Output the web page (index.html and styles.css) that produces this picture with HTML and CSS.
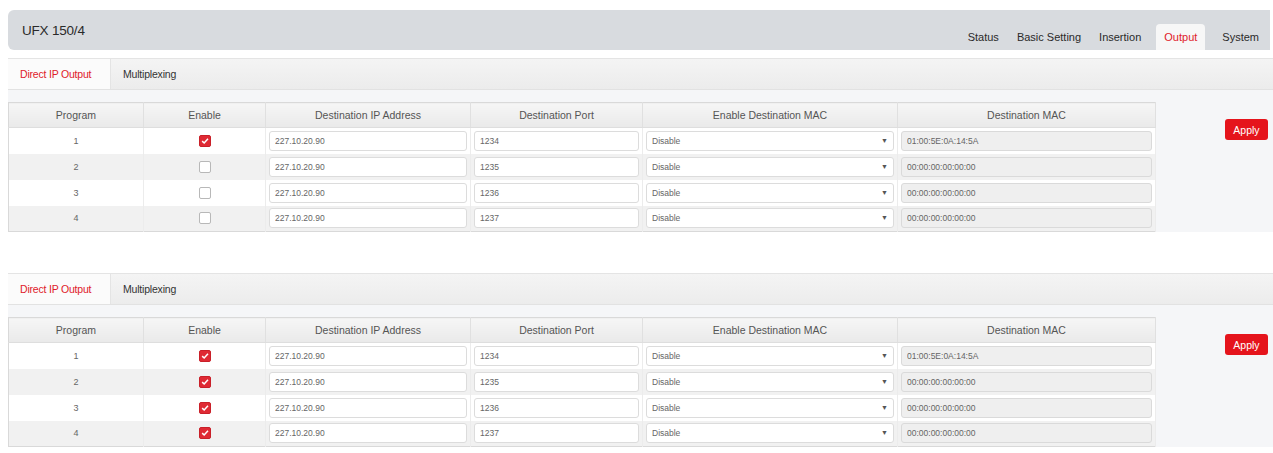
FILE: index.html
```html
<!DOCTYPE html>
<html lang="en">
<head>
    <meta charset="UTF-8">
    <title>UFX 150/4 - Output</title>
    <link rel="stylesheet" href="styles.css">
</head>
<body>
<div class="page">
    <div class="top-bar">
        <div class="device-name">UFX 150/4</div>
        <ul class="main-nav">
            <li>Status</li>
            <li>Basic Setting</li>
            <li>Insertion</li>
            <li class="active">Output</li>
            <li>System</li>
        </ul>
    </div>

    <!-- first panel: only program 1 enabled -->
    <div class="panel">
        <div class="sub-tabs">
            <div class="sub-tab active">Direct IP Output</div>
            <div class="sub-tab">Multiplexing</div>
        </div>
        <div class="panel-body">
            <table class="output-table">
                <thead>
                <tr>
                    <th class="col-program">Program</th>
                    <th class="col-enable">Enable</th>
                    <th class="col-ip">Destination IP Address</th>
                    <th class="col-port">Destination Port</th>
                    <th class="col-macsel">Enable Destination MAC</th>
                    <th class="col-mac">Destination MAC</th>
                </tr>
                </thead>
                <tbody>
                <tr>
                    <td>1</td>
                    <td><span class="check checked"><svg viewBox="0 0 12 12"><path d="M2.6 6.2 L5 8.4 L9.6 3.4" /></svg></span></td>
                    <td><input class="field" type="text" value="227.10.20.90"></td>
                    <td><input class="field" type="text" value="1234"></td>
                    <td><div class="select-wrap"><select class="field"><option>Disable</option></select><span class="arrow">&#9660;</span></div></td>
                    <td><input class="field readonly" type="text" value="01:00:5E:0A:14:5A" readonly></td>
                </tr>
                <tr>
                    <td>2</td>
                    <td><span class="check"></span></td>
                    <td><input class="field" type="text" value="227.10.20.90"></td>
                    <td><input class="field" type="text" value="1235"></td>
                    <td><div class="select-wrap"><select class="field"><option>Disable</option></select><span class="arrow">&#9660;</span></div></td>
                    <td><input class="field readonly" type="text" value="00:00:00:00:00:00" readonly></td>
                </tr>
                <tr>
                    <td>3</td>
                    <td><span class="check"></span></td>
                    <td><input class="field" type="text" value="227.10.20.90"></td>
                    <td><input class="field" type="text" value="1236"></td>
                    <td><div class="select-wrap"><select class="field"><option>Disable</option></select><span class="arrow">&#9660;</span></div></td>
                    <td><input class="field readonly" type="text" value="00:00:00:00:00:00" readonly></td>
                </tr>
                <tr>
                    <td>4</td>
                    <td><span class="check"></span></td>
                    <td><input class="field" type="text" value="227.10.20.90"></td>
                    <td><input class="field" type="text" value="1237"></td>
                    <td><div class="select-wrap"><select class="field"><option>Disable</option></select><span class="arrow">&#9660;</span></div></td>
                    <td><input class="field readonly" type="text" value="00:00:00:00:00:00" readonly></td>
                </tr>
                </tbody>
            </table>
            <div class="apply-area">
                <button class="apply-button">Apply</button>
            </div>
        </div>
    </div>

    <!-- second panel: all programs enabled -->
    <div class="panel panel-second">
        <div class="sub-tabs">
            <div class="sub-tab active">Direct IP Output</div>
            <div class="sub-tab">Multiplexing</div>
        </div>
        <div class="panel-body">
            <table class="output-table">
                <thead>
                <tr>
                    <th class="col-program">Program</th>
                    <th class="col-enable">Enable</th>
                    <th class="col-ip">Destination IP Address</th>
                    <th class="col-port">Destination Port</th>
                    <th class="col-macsel">Enable Destination MAC</th>
                    <th class="col-mac">Destination MAC</th>
                </tr>
                </thead>
                <tbody>
                <tr>
                    <td>1</td>
                    <td><span class="check checked"><svg viewBox="0 0 12 12"><path d="M2.6 6.2 L5 8.4 L9.6 3.4" /></svg></span></td>
                    <td><input class="field" type="text" value="227.10.20.90"></td>
                    <td><input class="field" type="text" value="1234"></td>
                    <td><div class="select-wrap"><select class="field"><option>Disable</option></select><span class="arrow">&#9660;</span></div></td>
                    <td><input class="field readonly" type="text" value="01:00:5E:0A:14:5A" readonly></td>
                </tr>
                <tr>
                    <td>2</td>
                    <td><span class="check checked"><svg viewBox="0 0 12 12"><path d="M2.6 6.2 L5 8.4 L9.6 3.4" /></svg></span></td>
                    <td><input class="field" type="text" value="227.10.20.90"></td>
                    <td><input class="field" type="text" value="1235"></td>
                    <td><div class="select-wrap"><select class="field"><option>Disable</option></select><span class="arrow">&#9660;</span></div></td>
                    <td><input class="field readonly" type="text" value="00:00:00:00:00:00" readonly></td>
                </tr>
                <tr>
                    <td>3</td>
                    <td><span class="check checked"><svg viewBox="0 0 12 12"><path d="M2.6 6.2 L5 8.4 L9.6 3.4" /></svg></span></td>
                    <td><input class="field" type="text" value="227.10.20.90"></td>
                    <td><input class="field" type="text" value="1236"></td>
                    <td><div class="select-wrap"><select class="field"><option>Disable</option></select><span class="arrow">&#9660;</span></div></td>
                    <td><input class="field readonly" type="text" value="00:00:00:00:00:00" readonly></td>
                </tr>
                <tr>
                    <td>4</td>
                    <td><span class="check checked"><svg viewBox="0 0 12 12"><path d="M2.6 6.2 L5 8.4 L9.6 3.4" /></svg></span></td>
                    <td><input class="field" type="text" value="227.10.20.90"></td>
                    <td><input class="field" type="text" value="1237"></td>
                    <td><div class="select-wrap"><select class="field"><option>Disable</option></select><span class="arrow">&#9660;</span></div></td>
                    <td><input class="field readonly" type="text" value="00:00:00:00:00:00" readonly></td>
                </tr>
                </tbody>
            </table>
            <div class="apply-area">
                <button class="apply-button">Apply</button>
            </div>
        </div>
    </div>
</div>
</body>
</html>
```

FILE: styles.css
```css
body {
    margin: 0;
    background-color: #ffffff;
    color: #444;
    font-family: "Liberation Sans", Arial, sans-serif;
}

.page {
    padding: 10px 0 0 8px;
}

.top-bar {
    display: flex;
    justify-content: space-between;
    align-items: flex-end;
    height: 40px;
    background-color: #d8dbdf;
    border-radius: 6px 0 0 6px;
    padding-left: 14px;
    margin-right: 3px;
}

.device-name {
    align-self: center;
    font-size: 13.5px;
    color: #2a2a2a;
    letter-spacing: -0.2px;
}

.main-nav {
    display: flex;
    list-style: none;
    margin: 0;
    padding: 0 2px 0 0;
    font-size: 11px;
    color: #2a2a2a;
}

.main-nav li {
    padding: 0 9px;
    height: 26px;
    line-height: 27px;
}

.main-nav li.active {
    background-color: #f7f7f7;
    color: #e0202a;
    border-radius: 4px 4px 0 0;
    padding: 0 8px;
    margin: 0 8px 0 6px;
}

.panel {
    margin-top: 8px;
}

.panel-second {
    margin-top: 41px;
}

.sub-tabs {
    display: flex;
    height: 30px;
    background: linear-gradient(#f4f4f4, #ececec);
    border-top: 1px solid #e4e4e4;
    border-bottom: 1px solid #e2e2e2;
    font-size: 10.5px;
}

.sub-tab {
    padding: 0 12px;
    line-height: 30px;
    color: #333;
    letter-spacing: -0.2px;
}

.sub-tab.active {
    background-color: #fbfbfb;
    color: #e0202a;
    border-right: 1px solid #e4e4e4;
    width: 78px;
}

.panel-body {
    display: flex;
    align-items: flex-start;
    background-color: #f5f6f8;
    padding-top: 12px;
}

.output-table {
    border-collapse: collapse;
    border: 1px solid #d9d9d9;
    width: 1147px;
    table-layout: fixed;
    font-size: 10.5px;
    color: #555;
}

.output-table th,
.output-table td {
    box-sizing: border-box;
}

.col-program { width: 135px; }
.col-enable { width: 122px; }
.col-ip { width: 205px; }
.col-port { width: 172px; }
.col-macsel { width: 255px; }
.col-mac { width: 258px; }

.output-table th {
    height: 25px;
    padding: 0;
    font-weight: normal;
    color: #555;
    background: linear-gradient(#f6f6f6, #eaeaea);
    border-right: 1px solid #e0e0e0;
    border-bottom: 1px solid #dedede;
}

.output-table td {
    height: 26px;
    padding: 0 3px;
    text-align: center;
    border-right: 1px solid #ececec;
    font-size: 9px;
    color: #666;
}

.output-table tbody tr:nth-child(odd) td {
    background-color: #ffffff;
}

.output-table tbody tr:nth-child(even) td {
    background-color: #f1f1f1;
}

.check {
    display: inline-block;
    width: 10px;
    height: 10px;
    border: 1px solid #b8b8b8;
    border-radius: 2px;
    background-color: #ffffff;
    vertical-align: middle;
}

.check.checked {
    background-color: #df2a34;
    border-color: #c92029;
}

.check svg {
    display: block;
    width: 10px;
    height: 10px;
}

.check svg path {
    fill: none;
    stroke: #ffffff;
    stroke-width: 1.8;
}

.field {
    box-sizing: border-box;
    width: 100%;
    height: 20px;
    border: 1px solid #dcdcdc;
    border-radius: 3px;
    background-color: #ffffff;
    padding: 0 5px;
    font-family: "Liberation Sans", Arial, sans-serif;
    font-size: 8.5px;
    color: #666;
    display: block;
}

.field.readonly {
    background-color: #efefef;
    border-color: #dadada;
}

.select-wrap {
    position: relative;
}

select.field {
    appearance: none;
    -webkit-appearance: none;
    border-radius: 3px;
}

.select-wrap .arrow {
    position: absolute;
    right: 6px;
    top: 6px;
    font-size: 7px;
    color: #555;
    pointer-events: none;
}

.apply-area {
    padding: 17px 0 0 69px;
}

.apply-button {
    background-color: #e5141c;
    color: #ffffff;
    border: none;
    border-radius: 3px;
    width: 43px;
    height: 21px;
    font-family: "Liberation Sans", Arial, sans-serif;
    font-size: 10.5px;
    padding: 0;
    cursor: pointer;
}
```
